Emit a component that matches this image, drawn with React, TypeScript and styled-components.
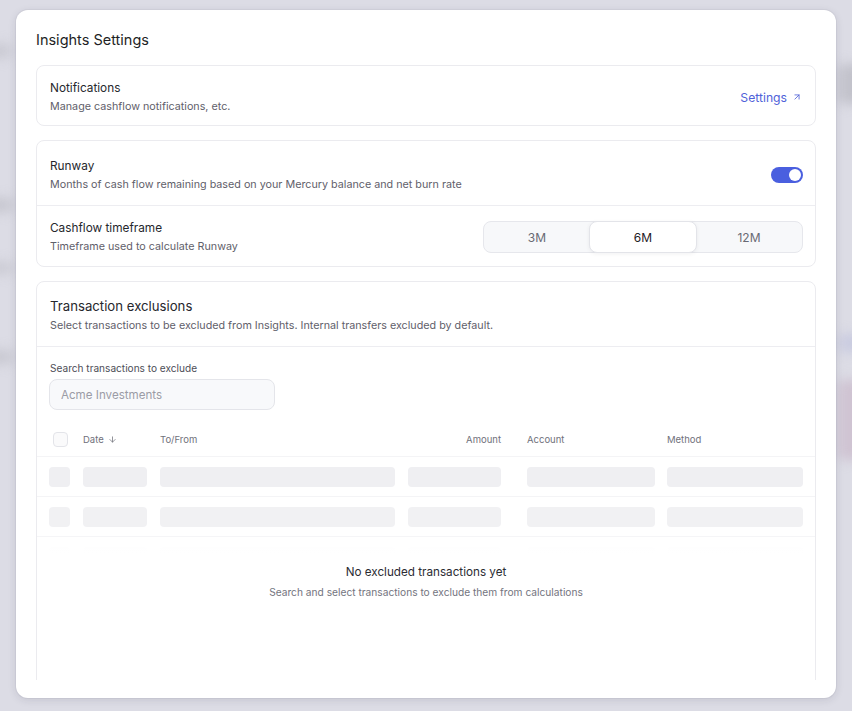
import styled, { createGlobalStyle } from "styled-components"
import { ArrowDown, ArrowUpRight } from "lucide-react"

const Global = createGlobalStyle`
  html, body { margin: 0; padding: 0; }
  body {
    font-family: Inter, "Noto Sans", "Liberation Sans", sans-serif;
    background: #dcdce4;
    color: #1f2026;
    -webkit-font-smoothing: antialiased;
  }
  * { box-sizing: border-box; }
`

const Page = styled.div`
  position: relative;
  width: 852px;
  height: 711px;
  overflow: hidden;
  background: #dcdce5;
  padding: 10px 16px 0;
`

// blurred app content peeking out behind the modal
const Blob = styled.div<{ $top: number; $left: number; $w: number; $h: number; $color: string }>`
  position: absolute;
  top: ${(p) => p.$top}px;
  left: ${(p) => p.$left}px;
  width: ${(p) => p.$w}px;
  height: ${(p) => p.$h}px;
  background: ${(p) => p.$color};
  filter: blur(6px);
  border-radius: 6px;
`

const Modal = styled.div`
  position: relative;
  width: 820px;
  height: 688px;
  background: #fff;
  border-radius: 12px;
  box-shadow: 0 2px 8px rgba(30, 30, 60, 0.12), 0 0 0 1px rgba(30, 30, 60, 0.04);
  padding: 20px 20px 18px;
  display: flex;
  flex-direction: column;
`

const Title = styled.h2`
  margin: 0 0 15px;
  font-size: 14.5px;
  line-height: 20px;
  font-weight: 400;
  color: #1e1f25;
`

const Scroll = styled.div`
  flex: 1;
  overflow: hidden;
  display: flex;
  flex-direction: column;
  gap: 14px;
`

const Card = styled.div`
  flex-shrink: 0;
  border: 1px solid #ebebef;
  border-radius: 8px;
  background: #fff;
`

const Row = styled.div<{ $pt: number; $pb: number; $divider?: boolean }>`
  display: flex;
  align-items: center;
  justify-content: space-between;
  padding: ${(p) => p.$pt}px 12px ${(p) => p.$pb}px 13px;
  border-bottom: ${(p) => (p.$divider ? "1px solid #ededf1" : "none")};
`

const Label = styled.div<{ $big?: boolean }>`
  font-size: ${(p) => (p.$big ? "13.2px" : "11.8px")};
  line-height: ${(p) => (p.$big ? "20px" : "18px")};
  color: #26272d;
`

const Sub = styled.div`
  margin-top: 2px;
  font-size: 10.75px;
  line-height: 16px;
  color: #5f606a;
`

const LinkButton = styled.a`
  display: flex;
  align-items: center;
  gap: 5px;
  font-size: 12.2px;
  color: #4f62d9;
  text-decoration: none;
  margin-right: 1px;
`

const Toggle = styled.div<{ $on: boolean }>`
  width: 32px;
  height: 16px;
  border-radius: 8px;
  background: ${(p) => (p.$on ? "#4a5fdf" : "#d5d6dc")};
  display: flex;
  align-items: center;
  justify-content: ${(p) => (p.$on ? "flex-end" : "flex-start")};
  padding: 2px;
  &::after {
    content: "";
    width: 12px;
    height: 12px;
    border-radius: 50%;
    background: #fff;
  }
`

const Segmented = styled.div`
  width: 320px;
  height: 32px;
  border: 1px solid #e6e7ec;
  border-radius: 8px;
  background: #f7f8fa;
  display: grid;
  grid-template-columns: repeat(3, 1fr);
`

const Segment = styled.button<{ $active?: boolean }>`
  font-family: inherit;
  font-size: 12px;
  border: ${(p) => (p.$active ? "1px solid #e3e4e9" : "1px solid transparent")};
  margin: -1px;
  border-radius: 8px;
  background: ${(p) => (p.$active ? "#fff" : "transparent")};
  color: ${(p) => (p.$active ? "#1f2026" : "#696a74")};
  box-shadow: ${(p) => (p.$active ? "0 1px 4px rgba(20,20,40,0.06)" : "none")};
  cursor: pointer;
`

const SearchBlock = styled.div`
  padding: 13px 13px 0 12px;
`

const FieldLabel = styled.div`
  font-size: 10.1px;
  line-height: 16px;
  color: #4d4e57;
  padding-left: 1px;
`

const Input = styled.input`
  margin-top: 3px;
  width: 226px;
  height: 31px;
  border: 1px solid #e4e5ea;
  border-radius: 8px;
  background: #f8f9fb;
  padding: 0 11px;
  font-family: inherit;
  font-size: 11.6px;
  color: #1f2026;
  &::placeholder { color: #9b9ca6; }
`

const columns = "34px 77px 248px 119px 140px 136px"

const TableHead = styled.div`
  margin-top: 12px;
  height: 35px;
  display: grid;
  grid-template-columns: ${columns};
  align-items: center;
  padding: 0 12px;
  border-bottom: 1px solid #f4f4f6;
`

const HeadCell = styled.div<{ $right?: boolean; $pr?: number }>`
  font-size: 9.5px;
  color: #70717b;
  display: flex;
  align-items: center;
  gap: 4px;
  justify-content: ${(p) => (p.$right ? "flex-end" : "flex-start")};
  padding-right: ${(p) => p.$pr ?? 0}px;
`

const Check = styled.div`
  width: 15px;
  height: 15px;
  border: 1px solid #e3e4e9;
  border-radius: 4px;
  background: #fafafb;
  margin-left: 4px;
`

const Body = styled.div`
  position: relative;
  padding-bottom: 110px;
`

const SkelRow = styled.div<{ $fade: number }>`
  height: 40px;
  display: grid;
  grid-template-columns: ${columns};
  align-items: center;
  padding: 0 12px;
  border-bottom: 1px solid #f4f4f6;
  opacity: ${(p) => p.$fade};
`

const Bar = styled.div<{ $w: number }>`
  width: ${(p) => p.$w}px;
  height: 20px;
  border-radius: 4px;
  background: #efeff2;
`

const Empty = styled.div`
  position: absolute;
  left: 0;
  right: 0;
  top: 80px;
  bottom: 0;
  background: linear-gradient(to bottom, rgba(255, 255, 255, 0.75) 0px, #fff 16px);
  display: flex;
  flex-direction: column;
  align-items: center;
  padding-top: 26px;
`

const EmptyTitle = styled.div`
  font-size: 11.7px;
  line-height: 18px;
  color: #2b2c33;
`

const EmptySub = styled.div`
  margin-top: 4px;
  font-size: 10.2px;
  line-height: 14px;
  color: #73747e;
`

const bars = [21, 64, 235, 93, 128, 136]

export default function App() {
  return (
    <Page>
      <Global />
      <Blob $top={44} $left={-20} $w={32} $h={14} $color="#c9c9d2" />
      <Blob $top={198} $left={-20} $w={34} $h={14} $color="#c6c6cf" />
      <Blob $top={262} $left={-20} $w={34} $h={12} $color="#cacad3" />
      <Blob $top={350} $left={-20} $w={34} $h={14} $color="#c8c8d1" />
      <Blob $top={64} $left={838} $w={40} $h={40} $color="#c2c2cb" />
      <Blob $top={334} $left={838} $w={40} $h={18} $color="#c9cbe0" />
      <Blob $top={380} $left={838} $w={40} $h={80} $color="#cfc3d2" />

      <Modal>
        <Title>Insights Settings</Title>
        <Scroll>
          <Card>
            <Row $pt={13} $pb={10}>
              <div>
                <Label>Notifications</Label>
                <Sub>Manage cashflow notifications, etc.</Sub>
              </div>
              <LinkButton href="#">
                Settings
                <ArrowUpRight size={10} strokeWidth={2} />
              </LinkButton>
            </Row>
          </Card>

          <Card>
            <Row $pt={16} $pb={12} $divider>
              <div>
                <Label>Runway</Label>
                <Sub>Months of cash flow remaining based on your Mercury balance and net burn rate</Sub>
              </div>
              <Toggle $on />
            </Row>
            <Row $pt={13} $pb={11}>
              <div>
                <Label>Cashflow timeframe</Label>
                <Sub>Timeframe used to calculate Runway</Sub>
              </div>
              <Segmented>
                <Segment>3M</Segment>
                <Segment $active>6M</Segment>
                <Segment>12M</Segment>
              </Segmented>
            </Row>
          </Card>

          <Card>
            <Row $pt={14} $pb={12} $divider>
              <div>
                <Label $big>Transaction exclusions</Label>
                <Sub>Select transactions to be excluded from Insights. Internal transfers excluded by default.</Sub>
              </div>
            </Row>
            <SearchBlock>
              <FieldLabel>Search transactions to exclude</FieldLabel>
              <Input placeholder="Acme Investments" />
            </SearchBlock>
            <TableHead>
              <HeadCell><Check /></HeadCell>
              <HeadCell>
                Date <ArrowDown size={9} strokeWidth={2} />
              </HeadCell>
              <HeadCell>To/From</HeadCell>
              <HeadCell $right $pr={26}>Amount</HeadCell>
              <HeadCell>Account</HeadCell>
              <HeadCell>Method</HeadCell>
            </TableHead>
            <Body>
              {[1, 0.85, 0.5].map((f, i) => (
                <SkelRow key={i} $fade={f}>
                  {bars.map((w, j) => (
                    <Bar key={j} $w={w} />
                  ))}
                </SkelRow>
              ))}
              <Empty>
                <EmptyTitle>No excluded transactions yet</EmptyTitle>
                <EmptySub>Search and select transactions to exclude them from calculations</EmptySub>
              </Empty>
            </Body>
          </Card>
        </Scroll>
      </Modal>
    </Page>
  )
}
